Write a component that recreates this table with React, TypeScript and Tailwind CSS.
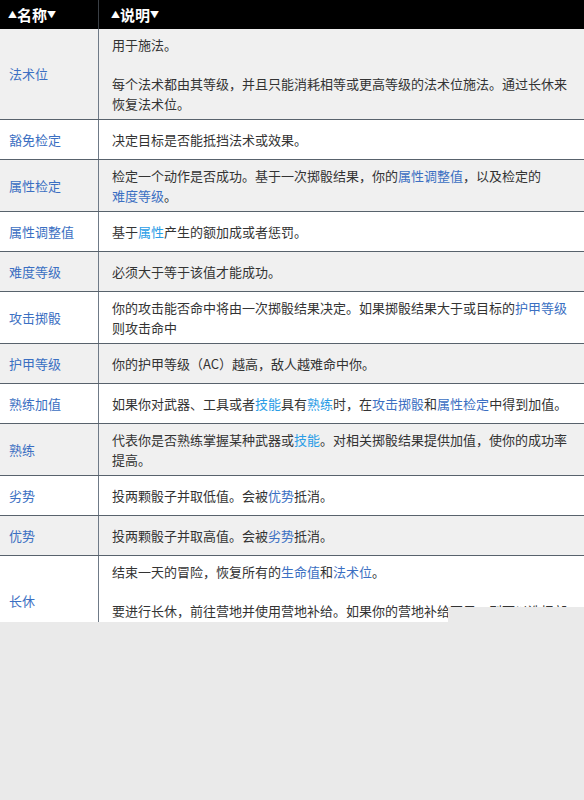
import type { ReactNode } from 'react'

const L = ({ children }: { children: ReactNode }) => (
  <span className="whitespace-nowrap text-[#3b6fc2]">{children}</span>
)
const C = ({ children }: { children: ReactNode }) => (
  <span className="whitespace-nowrap text-[#2a9de6]">{children}</span>
)

interface Row {
  name: string
  desc: ReactNode
}

const rows: Row[] = [
  {
    name: '法术位',
    desc: (
      <>
        用于施法。
        <br />
        <br />
        每个法术都由其等级，并且只能消耗相等或更高等级的法术位施法。通过长休来恢复法术位。
      </>
    ),
  },
  { name: '豁免检定', desc: '决定目标是否能抵挡法术或效果。' },
  {
    name: '属性检定',
    desc: (
      <>
        检定一个动作是否成功。基于一次掷骰结果，你的<L>属性调整值</L>，以及检定的<L>难度等级</L>。
      </>
    ),
  },
  {
    name: '属性调整值',
    desc: (
      <>
        基于<C>属性</C>产生的额加成或者惩罚。
      </>
    ),
  },
  { name: '难度等级', desc: '必须大于等于该值才能成功。' },
  {
    name: '攻击掷骰',
    desc: (
      <>
        你的攻击能否命中将由一次掷骰结果决定。如果掷骰结果大于或目标的<L>护甲等级</L>则攻击命中
      </>
    ),
  },
  { name: '护甲等级', desc: '你的护甲等级（AC）越高，敌人越难命中你。' },
  {
    name: '熟练加值',
    desc: (
      <>
        如果你对武器、工具或者<C>技能</C>具有<C>熟练</C>时，在<L>攻击掷骰</L>和<L>属性检定</L>中得到加值。
      </>
    ),
  },
  {
    name: '熟练',
    desc: (
      <>
        代表你是否熟练掌握某种武器或<C>技能</C>。对相关掷骰结果提供加值，使你的成功率提高。
      </>
    ),
  },
  {
    name: '劣势',
    desc: (
      <>
        投两颗骰子并取低值。会被<L>优势</L>抵消。
      </>
    ),
  },
  {
    name: '优势',
    desc: (
      <>
        投两颗骰子并取高值。会被<L>劣势</L>抵消。
      </>
    ),
  },
  {
    name: '长休',
    desc: (
      <>
        结束一天的冒险，恢复所有的<L>生命值</L>和<L>法术位</L>。
        <br />
        <br />
        要进行长休，前往营地并使用营地补给。如果你的营地补给不足，则可以选择部分休息来恢复。
      </>
    ),
  },
]

export default function App() {
  return (
    <div
      className="h-[800px] w-[584px] bg-[#eaeaea] text-[13px] leading-[19.5px] text-[#333]"
      style={{ fontFamily: '"Noto Sans CJK SC", "Noto Sans", sans-serif' }}
    >
      <div className="relative h-[622px] overflow-hidden">
        <div className="flex h-[29px] bg-black text-[15px] font-bold text-white">
          <div className="flex w-[99px] items-center border-r border-[#3a3f45] pl-[8px]">
            <span className="text-[9px]">▲</span>
            <span>名称</span>
            <span className="text-[9px]">▼</span>
          </div>
          <div className="flex flex-1 items-center pl-[12px]">
            <span className="text-[9px]">▲</span>
            <span>说明</span>
            <span className="text-[9px]">▼</span>
          </div>
        </div>
        {rows.map((r, i) => (
          <div
            key={r.name}
            className={`flex min-h-[40px] ${i > 0 ? 'border-t border-[#58626c]' : ''} ${
              i % 2 === 0 ? 'bg-[#f0f0f0]' : 'bg-white'
            }`}
          >
            <div className="flex w-[99px] shrink-0 items-center border-r border-[#6f7a87] pl-[9px] text-[#3b6fc2]">
              {r.name}
            </div>
            <div className="flex flex-1 items-center py-[6px] pl-[13px] pr-[11px]">
              <div>{r.desc}</div>
            </div>
          </div>
        ))}
        <div className="absolute bottom-0 left-[448px] right-0 h-[15px] bg-[#eaeaea]" />
      </div>
    </div>
  )
}
